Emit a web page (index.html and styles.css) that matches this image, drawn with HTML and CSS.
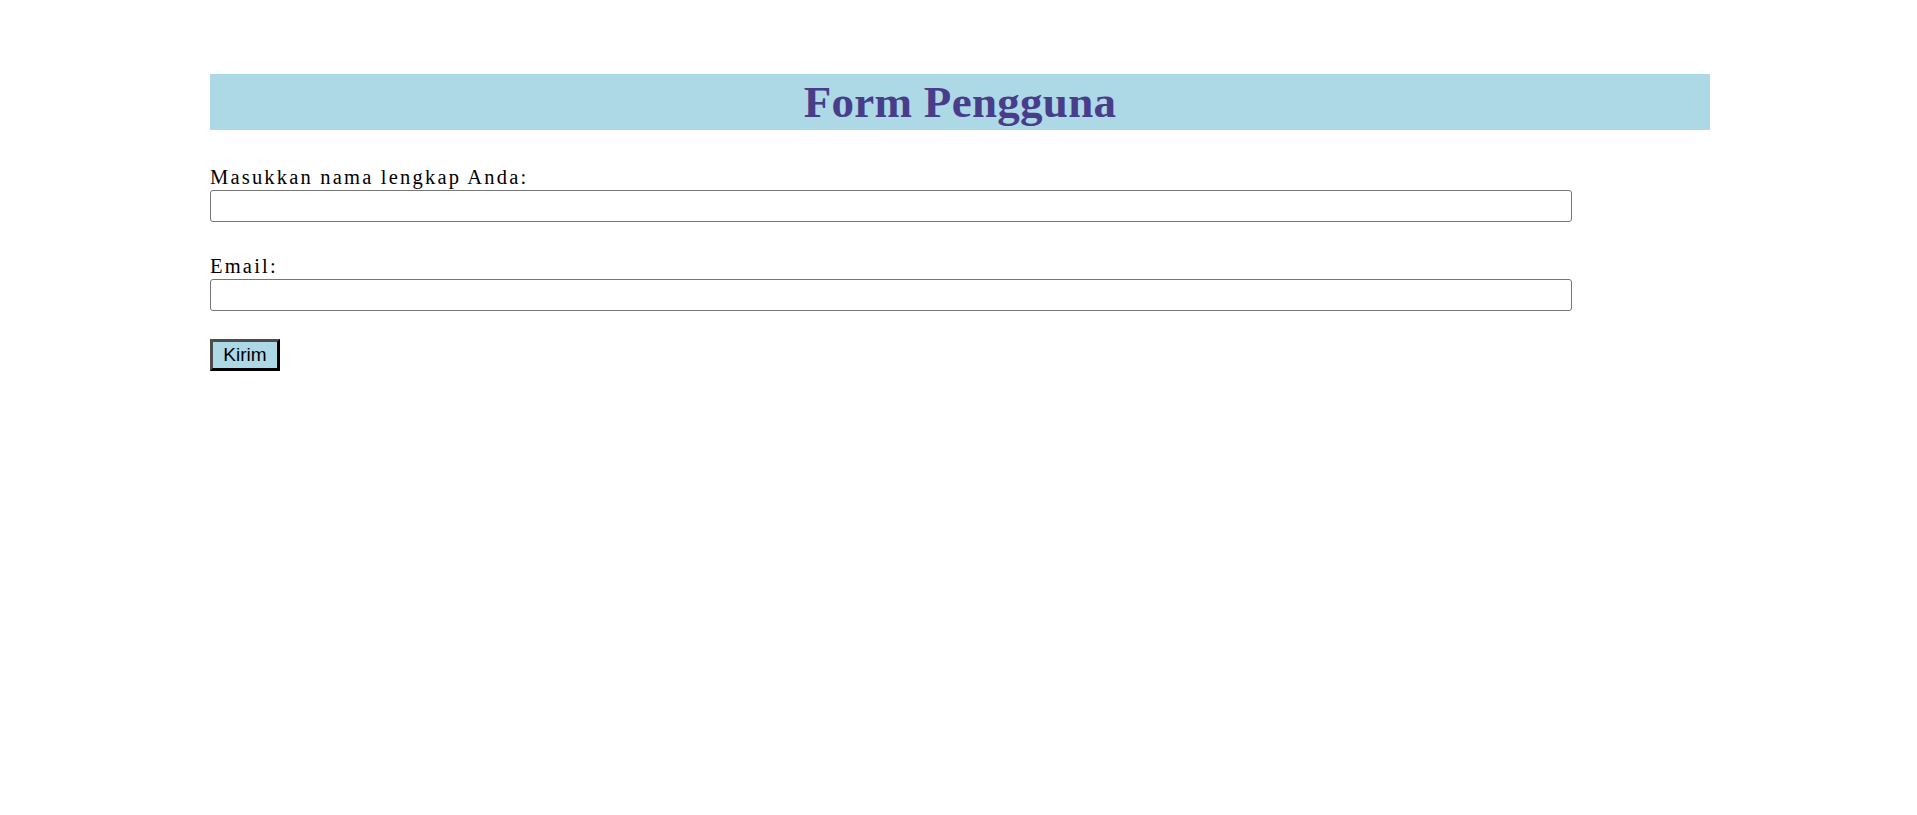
FILE: index.html
```html
<!DOCTYPE html>
<html lang="id">
<head>
<meta charset="utf-8">
<title>Form Pengguna</title>
<link rel="stylesheet" href="styles.css">
</head>
<body>
<div class="page">
  <h1 class="title">Form Pengguna</h1>
  <form class="form">
    <div class="field">
      <label class="label" for="nama">Masukkan nama lengkap Anda:</label>
      <input class="input" type="text" id="nama">
    </div>
    <div class="field">
      <label class="label" for="email">Email:</label>
      <input class="input" type="email" id="email">
    </div>
    <div class="actions">
      <button class="button" type="submit">Kirim</button>
    </div>
  </form>
</div>
</body>
</html>
```
FILE: styles.css
```css
html, body {
  margin: 0;
  padding: 0;
  background: #ffffff;
}
.page {
  width: 1500px;
  padding: 74px 0 0 210px;
  font-family: "Liberation Serif", "Times New Roman", serif;
}
.title {
  margin: 0;
  height: 56px;
  line-height: 56px;
  background: #add8e6;
  color: #483d8b;
  font-size: 45px;
  font-weight: bold;
  letter-spacing: 0.3px;
  text-align: center;
}
.form {
  display: flex;
  flex-direction: column;
  padding-top: 35px;
}
.field {
  display: flex;
  flex-direction: column;
  margin-bottom: 32px;
}
.label {
  display: block;
  font-size: 20.5px;
  line-height: 24px;
  letter-spacing: 2.2px;
  color: #000;
}
.input {
  box-sizing: border-box;
  width: 1362px;
  height: 32px;
  margin: 1px 0 0;
  border: 1px solid #767676;
  border-radius: 3px;
  padding: 2px 4px;
  font-size: 16px;
}
.actions {
  display: flex;
  margin-top: -4px;
}
.button {
  box-sizing: border-box;
  width: 70px;
  height: 32px;
  padding: 0;
  background: #add8e6;
  border: 3px solid;
  border-color: #4c4c4c #000 #000 #4c4c4c;
  font-family: "Liberation Sans", Arial, sans-serif;
  font-size: 19px;
  color: #000;
}
```
